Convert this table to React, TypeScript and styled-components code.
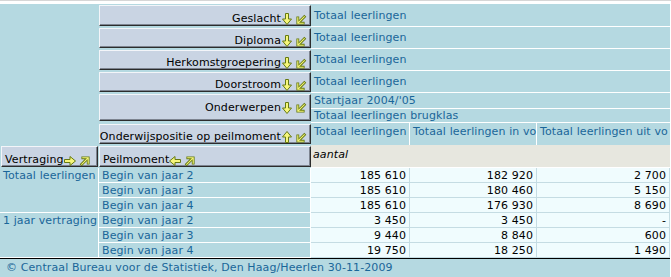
import React from "react";
import styled, { createGlobalStyle } from "styled-components";

const BLUE = "#b5d9e1";
const INK = "#1a6699";
const BTN = "#c9d4e3";
const DATA = "#f0fcfe";
const GRID = "#c5dce3";
const UNIT = "#e7e7df";
const ARROW_FILL = "#f6f67a";
const ARROW_LINE = "#667a12";

const GlobalStyle = createGlobalStyle`
  html, body { margin: 0; padding: 0; background: #ffffff; }
  body { font-family: "DejaVu Sans", Verdana, sans-serif; font-size: 11px; }
`;

const Page = styled.div`
  width: 671px;
  border-top: 1px solid #d6d6d6;
  padding-top: 3px;
`;

const Table = styled.table`
  border-collapse: separate;
  border-spacing: 0;
  table-layout: fixed;
  width: 670px;
  font-family: "DejaVu Sans", Verdana, sans-serif;
  font-size: 11px;
  line-height: 13px;
  letter-spacing: 0.1px;
`;

const Row = styled.tr<{ $h: number }>`
  height: ${(p) => p.$h}px;
`;

const Stub = styled.td`
  background: ${BLUE};
  padding: 0;
`;

const ButtonCell = styled.td<{ $padX?: number }>`
  background: ${BLUE};
  padding: 1px ${(p) => p.$padX ?? 0}px;
  vertical-align: top;
`;

const FieldButton = styled.div<{
  $h: number;
  $align: "left" | "right";
  $valign: "bottom" | "middle";
}>`
  box-sizing: border-box;
  height: ${(p) => p.$h}px;
  display: flex;
  justify-content: ${(p) => (p.$align === "right" ? "flex-end" : "flex-start")};
  align-items: ${(p) => (p.$valign === "middle" ? "center" : "flex-end")};
  padding: 0 4px 0 3px;
  background: ${BTN};
  border-top: 1px solid #f3f5f9;
  border-left: 1px solid #f3f5f9;
  border-right: 1px solid #2c2c2c;
  border-bottom: 1px solid #2c2c2c;
  box-shadow: inset -1px -1px 0 #7d8490;
  color: #000;
  white-space: nowrap;
  line-height: 12px;
`;

const ButtonLabel = styled.span`
  display: inline-block;
`;

const IconSvg = styled.svg<{ $lift: number; $gap: number }>`
  display: inline-block;
  vertical-align: ${(p) => p.$lift}px;
  margin-left: ${(p) => p.$gap}px;
  overflow: visible;
`;

const DimCell = styled.td`
  background: ${BLUE};
  color: ${INK};
  border-bottom: 1px solid #ffffff;
  padding: 0 3px;
  white-space: nowrap;
  overflow: hidden;
  vertical-align: middle;
`;

const ColHead = styled.td<{ $last?: boolean }>`
  background: ${BLUE};
  color: ${INK};
  border-right: ${(p) => (p.$last ? "none" : "1px solid #ffffff")};
  vertical-align: top;
  padding: 2px 0 0 3px;
  white-space: nowrap;
  overflow: visible;
`;

const UnitCell = styled.td`
  background: ${UNIT};
  color: #000;
  font-style: italic;
  vertical-align: top;
  padding: 3px 2px 0;
  border-bottom: 1px solid #ffffff;
`;

const Label = styled.td<{ $first?: boolean }>`
  background: ${BLUE};
  color: ${INK};
  padding: ${(p) => (p.$first ? "1px 3px 0 3px" : "0 3px")};
  vertical-align: ${(p) => (p.$first ? "top" : "middle")};
  border-right: 1px solid #ffffff;
  border-bottom: 1px solid #ffffff;
  white-space: nowrap;
  overflow: hidden;
`;

const Num = styled.td`
  background: ${DATA};
  color: #000;
  text-align: right;
  padding: 0 3px 0 0;
  border-right: 1px solid ${GRID};
  border-bottom: 1px solid ${GRID};
  vertical-align: middle;
  white-space: nowrap;
`;

const Footer = styled.td`
  background: ${BLUE};
  color: ${INK};
  border-top: 1px solid #000000;
  padding: 2px 6px 0;
  vertical-align: top;
  white-space: nowrap;
`;

type IconProps = { gap?: number };

const ArrowDown = ({ gap = 0 }: IconProps) => (
  <IconSvg width="10" height="12" viewBox="0 0 10 12" $lift={3} $gap={gap}>
    <path
      d="M3.5 0.5 H6.5 V6 H9.5 L5 11.5 L0.5 6 H3.5 Z"
      fill={ARROW_FILL}
      stroke={ARROW_LINE}
      strokeWidth="1"
      strokeLinejoin="miter"
    />
  </IconSvg>
);

const ArrowUp = ({ gap = 0 }: IconProps) => (
  <IconSvg width="10" height="12" viewBox="0 0 10 12" $lift={3} $gap={gap}>
    <path
      d="M3.5 11.5 H6.5 V6 H9.5 L5 0.5 L0.5 6 H3.5 Z"
      fill={ARROW_FILL}
      stroke={ARROW_LINE}
      strokeWidth="1"
    />
  </IconSvg>
);

const ArrowRight = ({ gap = 0 }: IconProps) => (
  <IconSvg width="12" height="10" viewBox="0 0 12 10" $lift={3} $gap={gap}>
    <path
      d="M0.5 3.5 V6.5 H6 V9.5 L11.5 5 L6 0.5 V3.5 Z"
      fill={ARROW_FILL}
      stroke={ARROW_LINE}
      strokeWidth="1"
    />
  </IconSvg>
);

const ArrowLeft = ({ gap = 0 }: IconProps) => (
  <IconSvg width="12" height="10" viewBox="0 0 12 10" $lift={3} $gap={gap}>
    <path
      d="M11.5 3.5 V6.5 H6 V9.5 L0.5 5 L6 0.5 V3.5 Z"
      fill={ARROW_FILL}
      stroke={ARROW_LINE}
      strokeWidth="1"
    />
  </IconSvg>
);

const DiagDownLeft = ({ gap = 0 }: IconProps) => (
  <IconSvg width="10" height="10" viewBox="0 0 10 10" $lift={1} $gap={gap}>
    <path
      d="M8.3 1.7 L2.6 7.4 M1.8 2.8 V8.2 H7.2"
      fill="none"
      stroke={ARROW_LINE}
      strokeWidth="2.8"
      strokeLinecap="square"
    />
    <path
      d="M8.3 1.7 L2.6 7.4 M1.8 2.8 V8.2 H7.2"
      fill="none"
      stroke={ARROW_FILL}
      strokeWidth="1.1"
      strokeLinecap="square"
    />
  </IconSvg>
);

const DiagUpRight = ({ gap = 0 }: IconProps) => (
  <IconSvg width="10" height="10" viewBox="0 0 10 10" $lift={2} $gap={gap}>
    <path
      d="M1.7 8.3 L7.4 2.6 M2.8 1.8 H8.2 V7.2"
      fill="none"
      stroke={ARROW_LINE}
      strokeWidth="2.8"
      strokeLinecap="square"
    />
    <path
      d="M1.7 8.3 L7.4 2.6 M2.8 1.8 H8.2 V7.2"
      fill="none"
      stroke={ARROW_FILL}
      strokeWidth="1.1"
      strokeLinecap="square"
    />
  </IconSvg>
);

const filters = ["Geslacht", "Diploma", "Herkomstgroepering", "Doorstroom"];

const groups = [
  {
    name: "Totaal leerlingen",
    rows: [
      ["Begin van jaar 2", "185 610", "182 920", "2 700"],
      ["Begin van jaar 3", "185 610", "180 460", "5 150"],
      ["Begin van jaar 4", "185 610", "176 930", "8 690"],
    ],
  },
  {
    name: "1 jaar vertraging",
    rows: [
      ["Begin van jaar 2", "3 450", "3 450", "-"],
      ["Begin van jaar 3", "9 440", "8 840", "600"],
      ["Begin van jaar 4", "19 750", "18 250", "1 490"],
    ],
  },
];

export default function App() {
  return (
    <>
      <GlobalStyle />
      <Page>
        <Table>
          <colgroup>
            <col style={{ width: 99 }} />
            <col style={{ width: 212 }} />
            <col style={{ width: 99 }} />
            <col style={{ width: 127 }} />
            <col style={{ width: 133 }} />
          </colgroup>
          <tbody>
            {filters.map((f, i) => (
              <Row key={f} $h={i === 0 ? 23 : 22}>
                {i === 0 && <Stub rowSpan={7} />}
                <ButtonCell>
                  <FieldButton $h={i === 0 ? 21 : 20} $align="right" $valign="bottom">
                    <ButtonLabel>{f}</ButtonLabel>
                    <ArrowDown gap={1} />
                    <DiagDownLeft gap={4} />
                  </FieldButton>
                </ButtonCell>
                <DimCell colSpan={3}>Totaal leerlingen</DimCell>
              </Row>
            ))}
            <Row $h={16}>
              <ButtonCell rowSpan={2}>
                <FieldButton $h={27} $align="right" $valign="middle">
                  <ButtonLabel>Onderwerpen</ButtonLabel>
                  <ArrowDown gap={1} />
                  <DiagDownLeft gap={4} />
                </FieldButton>
              </ButtonCell>
              <DimCell colSpan={3}>Startjaar 2004/'05</DimCell>
            </Row>
            <Row $h={13}>
              <DimCell colSpan={3}>Totaal leerlingen brugklas</DimCell>
            </Row>
            <Row $h={22}>
              <ButtonCell>
                <FieldButton $h={20} $align="right" $valign="bottom">
                  <ButtonLabel>Onderwijspositie op peilmoment</ButtonLabel>
                  <ArrowUp gap={1} />
                  <DiagDownLeft gap={4} />
                </FieldButton>
              </ButtonCell>
              <ColHead>Totaal leerlingen</ColHead>
              <ColHead>Totaal leerlingen in vo</ColHead>
              <ColHead $last>Totaal leerlingen uit vo</ColHead>
            </Row>
            <Row $h={23}>
              <ButtonCell $padX={1}>
                <FieldButton $h={21} $align="left" $valign="bottom">
                  <ButtonLabel>Vertraging</ButtonLabel>
                  <ArrowRight gap={0} />
                  <DiagUpRight gap={4} />
                </FieldButton>
              </ButtonCell>
              <ButtonCell>
                <FieldButton $h={21} $align="left" $valign="bottom">
                  <ButtonLabel>Peilmoment</ButtonLabel>
                  <ArrowLeft gap={0} />
                  <DiagUpRight gap={4} />
                </FieldButton>
              </ButtonCell>
              <UnitCell colSpan={3}>aantal</UnitCell>
            </Row>
            {groups.map((g) =>
              g.rows.map((r, ri) => (
                <Row key={g.name + r[0]} $h={15}>
                  {ri === 0 && (
                    <Label rowSpan={g.rows.length} $first>
                      {g.name}
                    </Label>
                  )}
                  <Label>{r[0]}</Label>
                  <Num>{r[1]}</Num>
                  <Num>{r[2]}</Num>
                  <Num>{r[3]}</Num>
                </Row>
              ))
            )}
            <Row $h={21}>
              <Footer colSpan={5}>
                © Centraal Bureau voor de Statistiek, Den Haag/Heerlen 30-11-2009
              </Footer>
            </Row>
          </tbody>
        </Table>
      </Page>
    </>
  );
}
